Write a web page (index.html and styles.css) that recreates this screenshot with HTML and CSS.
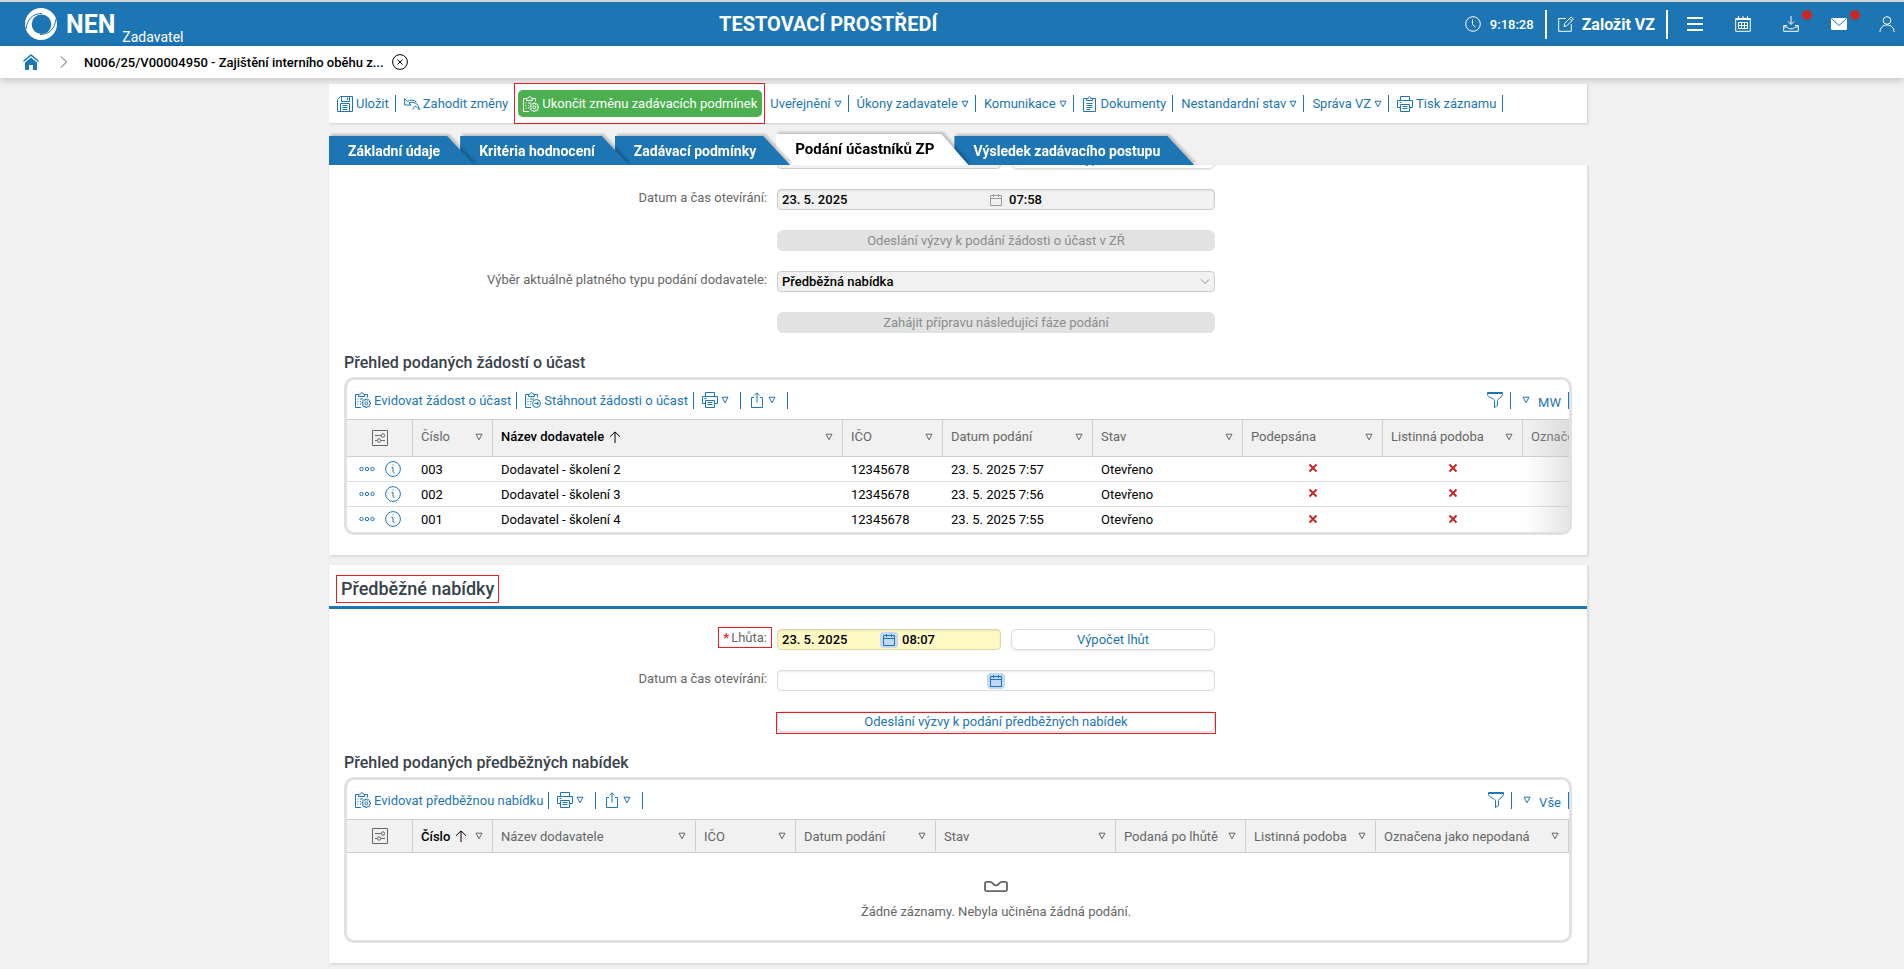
FILE: index.html
```html
<!DOCTYPE html>
<html lang="cs">
<head>
    <meta charset="UTF-8">
    <meta name="viewport" content="width=device-width, initial-scale=1.0">
    <title>NEN - Zadavatel</title>
    <link rel="stylesheet" href="styles.css">
</head>
<body>

<!-- icons -->
<svg class="sprite" aria-hidden="true">
    <symbol id="i-save" viewBox="0 0 16 16"><path d="M3.5.5h12v15H.5V3.500zM4.500.5v5h8V.5M10.500 1.500v2.500M3.500 15.500v-8h9v8M5.500 9.500h5M5.500 11.500h5M5.500 13.500h5"/></symbol>
    <symbol id="i-undo" viewBox="0 0 16 16"><path d="M.6 2.500v6.500h6.500L4.800 6.900c3-1.200 6-.6 8 1.100 1.500 1.300 2.300 3.300 2.600 6-1-2-2.500-3.300-4.400-3.700L8.500 13.500M.8 2.800l2.500 2.500C6 3.600 10 3.800 12.500 6"/></symbol>
    <symbol id="i-clipgear" viewBox="0 0 16 16"><path d="M6 15.500H.5V2.500h3M9.500 2.500h3v3M3.500 4.500v-2l2-.5c0-2 2.500-2 2.500 0l1.500.5v2zM2.500 7h1M5 7h3M2.500 9.500h1M5 9.500h1M2.500 12h1M5 12h1"/><circle cx="11.300" cy="11.300" r="1.400"/><path d="M10.600 7h1.400l.4 1.400 1.500-.7 1 1-.7 1.500 1.300.4v1.400l-1.300.4.7 1.500-1 1-1.500-.7-.4 1.300h-1.400l-.4-1.300-1.500.7-1-1 .7-1.500-1.300-.4v-1.400l1.300-.4-.7-1.500 1-1 1.500.7z"/></symbol>
    <symbol id="i-cliparrow" viewBox="0 0 16 16"><path d="M6 15.500H.5V2.500h3M9.500 2.500h3v3M3.500 4.500v-2l2-.5c0-2 2.500-2 2.500 0l1.500.5v2zM2.500 7h1M5 7h4M2.500 9.500h1M5 9.500h1.500M2.500 12h1M5 12h1"/><circle cx="11.500" cy="11.500" r="4"/><path d="M9.500 11.500h4M12 9.800l1.700 1.700-1.700 1.700"/></symbol>
    <symbol id="i-clip" viewBox="0 0 16 16"><path d="M4.500 2.500h-3v13h12v-13h-3M4.500 4.500v-2h1.700c0-2.500 2.600-2.500 2.600 0h1.700v2zM4.500 7.500h6M4.500 9.500h6M4.500 11.500h6M4.500 13.500h4"/></symbol>
    <symbol id="i-print" viewBox="0 0 16 16"><path d="M3.500 4.500v-4h9v4M3.500 11.500h-3v-7h15v7h-3M3.500 8.500h9v7h-9zM5.500 10.500h5M5.500 12.500h5M2.500 6.500h2"/></symbol>
    <symbol id="i-share" viewBox="0 0 16 16"><path d="M5 5.500H2.500v10h11v-10H11M8 10.500V1M5.500 3.300L8 .8l2.500 2.500"/></symbol>
    <symbol id="i-filter" viewBox="0 0 16 16"><path d="M.5.500h15v2c0 3-5 4-5 6v5l-3 2v-7c0-2-7-3-7-6zM1 1.500h14"/></symbol>
    <symbol id="i-settings" viewBox="0 0 16 16"><path d="M.5.500h15v15H.5zM3 5.500h6M3 10.500h2M9 10.500h4"/><circle cx="11" cy="5.500" r="1.700"/><circle cx="7" cy="10.500" r="1.700"/></symbol>
    <symbol id="i-tri" viewBox="0 0 8 8"><path d="M1 1.200h6L4 6.800z"/></symbol>
    <symbol id="i-up" viewBox="0 0 12 12"><path d="M6 12V1M1 5.800L6 .9l5 4.900"/></symbol>
    <symbol id="i-dots" viewBox="0 0 16 16"><circle cx="2.500" cy="8" r="1.700"/><circle cx="8" cy="8" r="1.700"/><circle cx="13.500" cy="8" r="1.700"/></symbol>
    <symbol id="i-info" viewBox="0 0 16 16"><circle cx="8" cy="8" r="7.400"/><path d="M6.500 6.500H8v4q0 1 1.500 1M7.500 4h1"/></symbol>
    <symbol id="i-no" viewBox="0 0 10 10"><path d="M1.500 1.500l7 7M8.500 1.500l-7 7"/></symbol>
    <symbol id="i-cal" viewBox="0 0 12 12"><path d="M.5 1.500h11v10H.5zM.5 4.500h11M3.500 0v3M8.500 0v3"/></symbol>
    <symbol id="i-chev" viewBox="0 0 10 6"><path d="M1 .5l4 4 4-4"/></symbol>
    <symbol id="i-tray" viewBox="0 0 26 12"><path d="M3 1h4c2 0 3 4 6 4s4-4 6-4h4q2 0 2 2v6q0 2-2 2H3q-2 0-2-2V3q0-2 2-2z"/></symbol>
    <symbol id="i-clock" viewBox="0 0 16 16"><circle cx="8" cy="8" r="7.300"/><path d="M7.500 3.500v5l3 2.500"/></symbol>
    <symbol id="i-edit" viewBox="0 0 16 16"><path d="M8 2.500H.7v12.800h12.600V8M6 10.500l.6-3L13.200.9l2.200 2.200-6.600 6.700zM11.600 2.500l2.200 2.200"/></symbol>
    <symbol id="i-menu" viewBox="0 0 16 16"><path d="M0 2h16M0 8h16M0 14h16"/></symbol>
    <symbol id="i-calfull" viewBox="0 0 16 16"><path d="M.7 2.500h14.600v12.800H.7zM.5 3.500h15M3 6.500h10M3 9.500h10M3 12.500h10M3.500 6v7M6.500 6v7M9.500 6v7M12.500 6v7M3.500 0v3M8 0v3M12.500 0v3"/></symbol>
    <symbol id="i-inbox" viewBox="0 0 16 16"><path d="M8 0v8M5 5.500l3 3 3-3M4 9.500H.7v5.800h14.600V9.500H12M1 11h3c1 2.500 7 2.500 8 0h3"/></symbol>
    <symbol id="i-mail" viewBox="0 0 16 12"><path class="solid" d="M1.500 0h13Q16 0 16 1.500v9q0 1.500-1.500 1.500h-13Q0 12 0 10.500v-9Q0 0 1.500 0z"/><path class="flap" d="M1 1l7 6.500L15 1"/></symbol>
    <symbol id="i-user" viewBox="0 0 16 16"><circle cx="8" cy="4.500" r="3.800"/><path d="M1 16c0-4 2.500-7 7-7s7 3 7 7"/></symbol>
    <symbol id="i-home" viewBox="0 0 16 16"><path class="solid" d="M8 0l8 6.700-1 1.100L8 2.100 1 7.800 0 6.700zM8 3.500l6 5V16h-4v-5H6v5H2V8.500z"/></symbol>
    <symbol id="i-close" viewBox="0 0 16 16"><circle cx="8" cy="8" r="7.400"/><path d="M5.500 5.500l5 5M10.500 5.500l-5 5"/></symbol>
</svg>

<header class="header">
    <a class="brand" href="#">
        <svg class="logo" viewBox="0 0 32 32">
            <path d="M16 0a16 16 0 1 0 0 32 16 16 0 0 0 0-32zm.5 6.500a9.800 9.800 0 1 1 0 19.600 9.800 9.800 0 0 1 0-19.600z" fill-rule="evenodd"/>
            <path class="swirl" d="M1 21C2 12 7 5.500 17 5.500M31 11c-1 9-6 15.500-16 15.500"/>
        </svg>
        <span class="brand-name">NEN</span>
        <span class="brand-role">Zadavatel</span>
    </a>
    <div class="env">TESTOVACÍ PROSTŘEDÍ</div>
    <div class="header-right">
        <div class="clock"><svg class="icon"><use href="#i-clock"/></svg>9:18:28</div>
        <a class="create" href="#"><svg class="icon"><use href="#i-edit"/></svg>Založit VZ</a>
        <nav class="header-icons">
            <button aria-label="Menu"><svg class="icon thick"><use href="#i-menu"/></svg></button>
            <button aria-label="Kalendář"><svg class="icon"><use href="#i-calfull"/></svg></button>
            <button class="alert" aria-label="Stažené"><svg class="icon"><use href="#i-inbox"/></svg></button>
            <button class="alert" aria-label="Zprávy"><svg class="icon"><use href="#i-mail"/></svg></button>
            <button aria-label="Profil"><svg class="icon"><use href="#i-user"/></svg></button>
        </nav>
    </div>
</header>

<nav class="breadcrumb">
    <a class="home" href="#" aria-label="Domů"><svg class="icon"><use href="#i-home"/></svg></a>
    <svg class="sep" viewBox="0 0 8 12"><path d="M1 .5L6.500 6 1 11.500"/></svg>
    <a class="crumb" href="#">N006/25/V00004950 - Zajištění interního oběhu z...</a>
    <button class="crumb-close" aria-label="Zavřít"><svg class="icon"><use href="#i-close"/></svg></button>
</nav>

<main class="page">
    <div class="toolbar">
        <button class="tool"><svg class="icon"><use href="#i-save"/></svg>Uložit</button>
        <button class="tool"><svg class="icon"><use href="#i-undo"/></svg>Zahodit změny</button>
        <button class="finish"><svg class="icon"><use href="#i-clipgear"/></svg>Ukončit změnu zadávacích podmínek</button>
        <button class="tool">Uveřejnění<svg class="tri"><use href="#i-tri"/></svg></button>
        <button class="tool">Úkony zadavatele<svg class="tri"><use href="#i-tri"/></svg></button>
        <button class="tool">Komunikace<svg class="tri"><use href="#i-tri"/></svg></button>
        <button class="tool"><svg class="icon"><use href="#i-clip"/></svg>Dokumenty</button>
        <button class="tool">Nestandardní stav<svg class="tri"><use href="#i-tri"/></svg></button>
        <button class="tool">Správa VZ<svg class="tri"><use href="#i-tri"/></svg></button>
        <button class="tool"><svg class="icon"><use href="#i-print"/></svg>Tisk záznamu</button>
    </div>

    <nav class="tabs">
        <a href="#" class="tab"><span>Základní údaje</span></a>
        <a href="#" class="tab"><span>Kritéria hodnocení</span></a>
        <a href="#" class="tab"><span>Zadávací podmínky</span></a>
        <a href="#" class="tab active"><span>Podání účastníků ZP</span></a>
        <a href="#" class="tab"><span>Výsledek zadávacího postupu</span></a>
    </nav>

    <section class="panel scrolled">
        <div class="form">
            <div class="field split">
                <div class="date disabled"><input type="text" aria-label="Datum lhůty" disabled><input type="text" aria-label="Čas lhůty" disabled></div>
                <button class="btn">Výpočet lhůt</button>
            </div>
            <label for="open1">Datum a čas otevírání:</label>
            <div class="field date disabled">
                <input type="text" id="open1" value="23. 5. 2025" disabled>
                <button class="pick" aria-label="Vybrat datum" disabled><svg class="cal"><use href="#i-cal"/></svg></button>
                <input type="text" aria-label="Čas otevírání" value="07:58" disabled>
            </div>
            <button class="field btn" disabled>Odeslání výzvy k podání žádosti o účast v ZŘ</button>
            <label for="type">Výběr aktuálně platného typu podání dodavatele:</label>
            <div class="field select">
                <select id="type" disabled><option>Předběžná nabídka</option></select>
                <svg class="chev"><use href="#i-chev"/></svg>
            </div>
            <button class="field btn" disabled>Zahájit přípravu následující fáze podání</button>
        </div>

        <h3>Přehled podaných žádostí o účast</h3>
        <div class="grid faded">
            <div class="grid-tools">
                <button class="tool"><svg class="icon"><use href="#i-clipgear"/></svg>Evidovat žádost o účast</button>
                <button class="tool"><svg class="icon"><use href="#i-cliparrow"/></svg>Stáhnout žádosti o účast</button>
                <button class="tool menu" aria-label="Tisk"><svg class="icon"><use href="#i-print"/></svg><svg class="tri"><use href="#i-tri"/></svg></button>
                <button class="tool menu" aria-label="Export"><svg class="icon"><use href="#i-share"/></svg><svg class="tri"><use href="#i-tri"/></svg></button>
                <button class="tool filter" aria-label="Filtr"><svg class="icon"><use href="#i-filter"/></svg></button>
                <button class="tool view"><svg class="tri"><use href="#i-tri"/></svg><span>MW</span></button>
            </div>
            <table class="requests">
                <colgroup>
                    <col class="c-act"><col class="c-num"><col class="c-title"><col class="c-ico"><col class="c-150"><col class="c-150"><col class="c-140"><col class="c-140"><col class="c-last">
                </colgroup>
                <thead>
                    <tr>
                        <th class="act"><svg class="icon"><use href="#i-settings"/></svg></th>
                        <th><div>Číslo<svg class="tri"><use href="#i-tri"/></svg></div></th>
                        <th class="sorted"><div>Název dodavatele<svg class="up"><use href="#i-up"/></svg><svg class="tri"><use href="#i-tri"/></svg></div></th>
                        <th><div>IČO<svg class="tri"><use href="#i-tri"/></svg></div></th>
                        <th><div>Datum podání<svg class="tri"><use href="#i-tri"/></svg></div></th>
                        <th><div>Stav<svg class="tri"><use href="#i-tri"/></svg></div></th>
                        <th><div>Podepsána<svg class="tri"><use href="#i-tri"/></svg></div></th>
                        <th><div>Listinná podoba<svg class="tri"><use href="#i-tri"/></svg></div></th>
                        <th><div>Označena jako nepodaná</div></th>
                    </tr>
                </thead>
                <tbody>
                    <tr>
                        <td class="act"><svg class="icon"><use href="#i-dots"/></svg><svg class="icon"><use href="#i-info"/></svg></td>
                        <td>003</td><td>Dodavatel - školení 2</td><td>12345678</td><td>23. 5. 2025 7:57</td><td>Otevřeno</td>
                        <td class="no"><svg><use href="#i-no"/></svg></td><td class="no"><svg><use href="#i-no"/></svg></td><td></td>
                    </tr>
                    <tr>
                        <td class="act"><svg class="icon"><use href="#i-dots"/></svg><svg class="icon"><use href="#i-info"/></svg></td>
                        <td>002</td><td>Dodavatel - školení 3</td><td>12345678</td><td>23. 5. 2025 7:56</td><td>Otevřeno</td>
                        <td class="no"><svg><use href="#i-no"/></svg></td><td class="no"><svg><use href="#i-no"/></svg></td><td></td>
                    </tr>
                    <tr>
                        <td class="act"><svg class="icon"><use href="#i-dots"/></svg><svg class="icon"><use href="#i-info"/></svg></td>
                        <td>001</td><td>Dodavatel - školení 4</td><td>12345678</td><td>23. 5. 2025 7:55</td><td>Otevřeno</td>
                        <td class="no"><svg><use href="#i-no"/></svg></td><td class="no"><svg><use href="#i-no"/></svg></td><td></td>
                    </tr>
                </tbody>
            </table>
        </div>
    </section>

    <section class="panel">
        <h2><span class="marked">Předběžné nabídky</span></h2>
        <div class="form">
            <label for="deadline"><span class="marked"><b>*</b>Lhůta:</span></label>
            <div class="field split">
                <div class="date required">
                    <input type="text" id="deadline" value="23. 5. 2025">
                    <button class="pick" aria-label="Vybrat datum"><svg class="cal"><use href="#i-cal"/></svg></button>
                    <input type="text" aria-label="Čas lhůty" value="08:07">
                </div>
                <button class="btn">Výpočet lhůt</button>
            </div>
            <label for="open2">Datum a čas otevírání:</label>
            <div class="field date">
                <input type="text" id="open2">
                <button class="pick" aria-label="Vybrat datum"><svg class="cal"><use href="#i-cal"/></svg></button>
                <input type="text" aria-label="Čas otevírání">
            </div>
            <button class="field btn call">Odeslání výzvy k podání předběžných nabídek</button>
        </div>

        <h3>Přehled podaných předběžných nabídek</h3>
        <div class="grid">
            <div class="grid-tools">
                <button class="tool"><svg class="icon"><use href="#i-clipgear"/></svg>Evidovat předběžnou nabídku</button>
                <button class="tool menu" aria-label="Tisk"><svg class="icon"><use href="#i-print"/></svg><svg class="tri"><use href="#i-tri"/></svg></button>
                <button class="tool menu" aria-label="Export"><svg class="icon"><use href="#i-share"/></svg><svg class="tri"><use href="#i-tri"/></svg></button>
                <button class="tool filter" aria-label="Filtr"><svg class="icon"><use href="#i-filter"/></svg></button>
                <button class="tool view"><svg class="tri"><use href="#i-tri"/></svg><span>Vše</span></button>
            </div>
            <table class="offers">
                <colgroup>
                    <col class="c-act"><col class="c-num"><col><col class="c-ico"><col class="c-140"><col class="c-180"><col class="c-130"><col class="c-130"><col class="c-mark">
                </colgroup>
                <thead>
                    <tr>
                        <th class="act"><svg class="icon"><use href="#i-settings"/></svg></th>
                        <th class="sorted"><div>Číslo<svg class="up"><use href="#i-up"/></svg><svg class="tri"><use href="#i-tri"/></svg></div></th>
                        <th><div>Název dodavatele<svg class="tri"><use href="#i-tri"/></svg></div></th>
                        <th><div>IČO<svg class="tri"><use href="#i-tri"/></svg></div></th>
                        <th><div>Datum podání<svg class="tri"><use href="#i-tri"/></svg></div></th>
                        <th><div>Stav<svg class="tri"><use href="#i-tri"/></svg></div></th>
                        <th><div>Podaná po lhůtě<svg class="tri"><use href="#i-tri"/></svg></div></th>
                        <th><div>Listinná podoba<svg class="tri"><use href="#i-tri"/></svg></div></th>
                        <th><div>Označena jako nepodaná<svg class="tri"><use href="#i-tri"/></svg></div></th>
                    </tr>
                </thead>
                <tbody>
                    <tr>
                        <td></td>
                        <td class="empty" colspan="8"><svg class="tray"><use href="#i-tray"/></svg>Žádné záznamy. Nebyla učiněna žádná podání.</td>
                    </tr>
                </tbody>
            </table>
        </div>
    </section>
</main>

</body>
</html>
```

FILE: styles.css
```css
* {
    box-sizing: border-box;
}

body {
    margin: 0;
    background: #f1f1f1;
    color: #000;
    font: 13px/17px Roboto, "Liberation Sans", sans-serif;
}

button,
input,
select {
    font: inherit;
    margin: 0;
}

button {
    background: none;
    border: 0;
    padding: 0;
    color: #1d75b3;
    cursor: pointer;
}

a {
    color: inherit;
    text-decoration: none;
}

svg {
    display: block;
    flex: none;
    fill: none;
    stroke: currentColor;
}

.sprite {
    display: none;
}

.icon {
    width: 16px;
    height: 16px;
}

.tri {
    width: 8px;
    height: 8px;
}

.thick {
    stroke-width: 2;
}

.solid {
    fill: currentColor;
    stroke: none;
}

/* header */
.header {
    display: flex;
    justify-content: space-between;
    align-items: center;
    height: 46px;
    padding: 0 9px 0 25px;
    border-top: 2px solid #d5d5d5;
    background: #1d75b3;
    color: #fff;
}

.brand {
    display: flex;
    align-items: center;
    height: 100%;
    padding-right: 8px;
}

.logo {
    width: 32px;
    height: 32px;
    fill: #fff;
    stroke: none;
}

.logo .swirl {
    fill: none;
    stroke: #1d75b3;
    stroke-width: 1;
}

.brand-name {
    margin-left: 9px;
    font-size: 25px;
    font-weight: 700;
}

.brand-role {
    align-self: flex-end;
    margin-left: 7px;
    padding-bottom: 2px;
    font-size: 14px;
    line-height: 14px;
}

.env {
    font-size: 20px;
    font-weight: 700;
    line-height: 24px;
}

.header-right,
.clock,
.create,
.header-icons {
    display: flex;
    align-items: center;
}

.clock {
    gap: 9px;
    padding-right: 11px;
    font-weight: 500;
}

.create {
    gap: 8px;
    height: 29px;
    padding: 0 11px;
    border: solid #fff;
    border-width: 0 2px;
    font-size: 16px;
    font-weight: 700;
}

.header-icons {
    gap: 32px;
    padding-left: 19px;
}

.header-icons button {
    color: #fff;
}

.flap {
    stroke: #1d75b3;
}

.alert {
    position: relative;
}

.alert::after {
    content: "";
    position: absolute;
    top: -6px;
    right: -13px;
    width: 10px;
    height: 10px;
    border-radius: 50%;
    background: #c62828;
}

.breadcrumb {
    position: relative;
    display: flex;
    align-items: center;
    height: 32px;
    padding-left: 23px;
    background: #fff;
    box-shadow: 0 2px 8px rgba(0, 0, 0, .2);
}

.home {
    color: #1d75b3;
}

.sep {
    width: 8px;
    height: 12px;
    margin: 0 16px 0 21px;
    color: #555;
}

.crumb {
    font-weight: 500;
}

.crumb-close {
    margin-left: 8px;
    color: #000;
}

/* page */
.page {
    max-width: 1270px;
    margin: 0 auto;
    padding: 6px 0 6px 12px;
}

.toolbar {
    display: flex;
    align-items: center;
    height: 39px;
    background: #fff;
    box-shadow: 1px 1px 2px rgba(0, 0, 0, .15);
}

.tool {
    display: flex;
    align-items: center;
    gap: 3px;
    height: 17px;
    padding: 0 6px 0 8px;
    border-right: 1px solid #1d75b3;
    white-space: nowrap;
}

.finish {
    position: relative;
    display: flex;
    align-items: center;
    gap: 3px;
    height: 27px;
    margin: 0 0 0 3px;
    padding: 0 5px;
    border-radius: 5px;
    background: #4caf50;
    color: #fff;
    white-space: nowrap;
}

.finish::after,
.marked::after,
.call::after {
    content: "";
    position: absolute;
    inset: -7px -3px -7px -4px;
    border: 1px solid #ed1c24;
}

.marked,
.call {
    position: relative;
}

.marked::after {
    inset: -3px -5px;
}

.call::after {
    inset: 0 -2px -3px;
}

.tabs {
    display: flex;
    align-items: flex-end;
    height: 31px;
    margin-top: 11px;
}

.tab {
    position: relative;
    height: 29px;
    padding: 0 20px 0 19px;
    color: #fff;
    font-size: 14px;
    font-weight: 700;
    line-height: 31px;
    white-space: nowrap;
    filter: drop-shadow(2px -2px 1px rgba(0, 0, 0, .2));
}

.tab span {
    position: relative;
}

.tab::before {
    content: "";
    position: absolute;
    inset: 0 -14px 0 0;
    background: #1d75b3;
    clip-path: polygon(0 0, calc(100% - 27px) 0, 100% 100%, 0 100%);
}

.tab:nth-child(1) { z-index: 5; }
.tab:nth-child(2) { z-index: 4; }
.tab:nth-child(3) { z-index: 3; }
.tab:nth-child(4) { z-index: 2; }
.tab:nth-child(5) { z-index: 1; }

.tab.active {
    height: 31px;
    color: #000;
    font-size: 15px;
}

.tab.active::before {
    background: #fff;
}

.panel {
    margin-bottom: 10px;
    padding-bottom: 20px;
    background: #fff;
    box-shadow: 1px 1px 3px rgba(0, 0, 0, .15);
}

.panel:last-child {
    margin-bottom: 0;
}

.scrolled {
    overflow: hidden;
}

h2 {
    display: flex;
    align-items: center;
    height: 44px;
    margin: 0;
    padding: 6px 12px 0;
    border-bottom: 3px solid #1d75b3;
    color: #37424a;
    font-size: 18px;
    font-weight: 500;
    line-height: 22px;
}

h3 {
    margin: 20px 15px 4px;
    color: #37424a;
    font-size: 16px;
    font-weight: 500;
    line-height: 20px;
}

/* form */
.form {
    display: grid;
    grid-template-columns: 438fr 438fr 362fr;
    grid-auto-rows: 21px;
    gap: 20px 10px;
    padding: 20px 0 1px;
}

.scrolled .form {
    margin-top: -17px;
    padding: 0;
}

.form label {
    grid-column: 1;
    color: #666;
    text-align: right;
}

.form label b {
    margin-right: 2px;
    color: #d32f2f;
}

.field {
    grid-column: 2;
}

.split {
    display: grid;
    grid-template-columns: 224fr 204fr;
    gap: 10px;
}

.date,
.select select {
    border: 1px solid #ddd;
    border-radius: 4px;
    background: #fff;
    color: #000;
    font-weight: 500;
}

.date {
    display: flex;
    align-items: center;
    box-shadow: inset 0 1px 2px rgba(0, 0, 0, .08);
}

.date input {
    flex: 1;
    width: 0;
    padding: 0 4px;
    border: 0;
    background: none;
    color: #000;
}

.date.required {
    border-color: #ddd8a8;
    background: #fff9c4;
}

.disabled.date,
.select select {
    border-color: #ccc;
    background: #f1f1f1;
}

.pick {
    padding: 2px 3px;
    border-radius: 4px;
    background: #c2d9f5;
}

.pick:disabled {
    background: none;
    color: #999;
}

.cal {
    width: 12px;
    height: 12px;
}

.btn {
    height: 21px;
    border: 1px solid #ddd;
    border-radius: 6px;
    background: #fff;
    box-shadow: 0 1px 2px rgba(0, 0, 0, .1);
    line-height: 19px;
}

.btn:disabled {
    border-color: #e2e2e2;
    background: #e2e2e2;
    box-shadow: none;
    color: #8c8c8c;
}

.select {
    position: relative;
}

.select select {
    width: 100%;
    height: 21px;
    padding: 0 4px;
    appearance: none;
    opacity: 1;
}

.chev {
    position: absolute;
    top: 8px;
    right: 5px;
    width: 10px;
    height: 6px;
    color: #888;
}

/* grids */
.grid {
    position: relative;
    margin: 0 15px;
    overflow: hidden;
    border: 3px solid #dfe1e2;
    border-radius: 10px;
}

.faded::after {
    content: "";
    position: absolute;
    top: 39px;
    right: 0;
    bottom: 0;
    width: 44px;
    background: linear-gradient(to right, rgba(190, 190, 190, 0), rgba(190, 190, 190, .4));
}

.grid-tools {
    display: flex;
    align-items: center;
    height: 39px;
    padding-top: 1px;
}

.grid-tools .tool {
    padding-right: 5px;
}

.grid-tools .menu {
    padding-right: 11px;
}

.grid-tools .filter {
    margin-left: auto;
    padding-right: 7px;
}

.grid-tools .view {
    gap: 8px;
    padding: 0 7px 0 11px;
}

.view span {
    padding-top: 4px;
}

table {
    width: 100%;
    border-collapse: separate;
    border-spacing: 0;
    table-layout: fixed;
}

.requests {
    width: 1376px;
}

.c-act { width: 66px; }
.c-num { width: 80px; }
.c-title { width: 350px; }
.c-ico { width: 100px; }
.c-130 { width: 130px; }
.c-140 { width: 140px; }
.c-150 { width: 150px; }
.c-180 { width: 180px; }
.c-mark { width: 193px; }
.c-last { width: 200px; }

th {
    height: 38px;
    padding: 0 9px 0 8px;
    border: solid #d0d0d0;
    border-width: 1px 1px 1px 0;
    background: #f1f1f1;
    color: #666;
    font-weight: 400;
    text-align: left;
    white-space: nowrap;
}

.requests th {
    padding-bottom: 3px;
}

.offers th {
    height: 34px;
}

th div {
    display: flex;
    align-items: center;
}

th .tri {
    margin-left: auto;
}

th .up {
    width: 12px;
    height: 12px;
    margin-left: 5px;
}

th.sorted {
    color: #000;
    font-weight: 500;
}

.sorted .tri {
    color: #666;
}

table th.act {
    padding: 0 25px;
}

td {
    height: 25px;
    padding: 0 8px;
    border-bottom: 1px solid #ddd;
}

tr:last-child td {
    border-bottom: 0;
}

td.act {
    padding-left: 12px;
    color: #1d75b3;
    white-space: nowrap;
}

td.act svg {
    display: inline-block;
    margin-right: 10px;
    vertical-align: top;
}

td.act svg + svg {
    margin-right: 0;
}

td.no {
    padding-bottom: 2px;
}

.no svg {
    width: 10px;
    height: 10px;
    margin: 0 auto;
    color: #c62828;
    stroke-width: 2;
}

td.empty {
    height: 87px;
    padding: 8px 8px 0 18px;
    color: #666;
    text-align: center;
}

.tray {
    width: 26px;
    height: 11px;
    margin: 0 auto 11px;
    stroke-width: 2;
}
```
